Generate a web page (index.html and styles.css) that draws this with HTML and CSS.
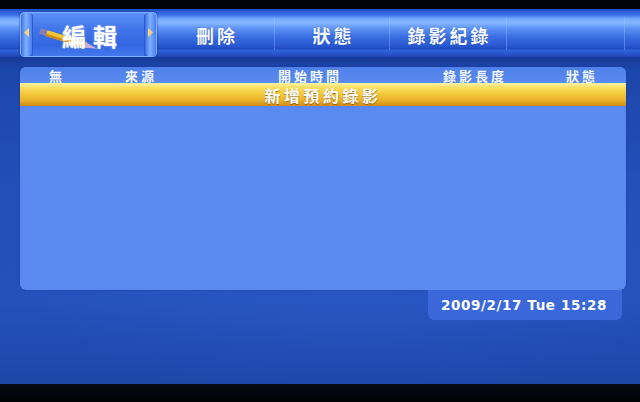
FILE: index.html
```html
<!DOCTYPE html>
<html lang="zh-Hant">
<head>
<meta charset="utf-8">
<title>預約錄影</title>
<link rel="stylesheet" href="styles.css">
</head>
<body>
<div class="screen">
  <div class="bezel-top"></div>
  <nav class="tabbar">
    <div class="tab-lead"></div>
    <div class="tab-active">
      <span class="cap cap-left">
        <svg width="5" height="9" viewBox="0 0 5 9"><polygon points="5,0 0,4.5 5,9" fill="#f4d47a"/></svg>
      </span>
      <span class="tab-body">
        <svg class="pencil" width="60" height="24" viewBox="0 0 60 24">
          <g transform="translate(2,3) rotate(17.2)">
            <rect x="0" y="-3" width="7" height="6" fill="#8a7fb4"/>
            <rect x="7" y="-3" width="40" height="6" fill="#f3c630"/>
            <rect x="7" y="0.8" width="40" height="2.2" fill="#d38a12"/>
            <polygon points="47,-3 60,0 47,3" fill="#c6b0dc"/>
          </g>
        </svg>
        <span class="active-label">編輯</span>
      </span>
      <span class="cap cap-right">
        <svg width="5" height="9" viewBox="0 0 5 9"><polygon points="0,0 5,4.5 0,9" fill="#f4d47a"/></svg>
      </span>
    </div>
    <div class="tab tab-w118">刪除</div>
    <div class="tab tab-w115">狀態</div>
    <div class="tab tab-w117">錄影紀錄</div>
    <div class="tab tab-w118"></div>
    <div class="tab-rest"></div>
  </nav>
  <main class="content">
    <section class="panel">
      <div class="head">
        <span class="c1">無</span>
        <span class="c2">來源</span>
        <span class="c3">開始時間</span>
        <span class="c4">錄影長度</span>
        <span class="c5">狀態</span>
      </div>
      <div class="new-row">新增預約錄影</div>
    </section>
    <div class="clock">2009/2/17 Tue 15:28</div>
  </main>
  <div class="bezel-bottom"></div>
</div>
</body>
</html>
```

FILE: styles.css
```css
* { box-sizing: border-box; }
html, body {
  margin: 0;
  padding: 0;
  background: #000;
}
body {
  width: 640px;
  height: 402px;
  overflow: hidden;
  font-family: "Noto Sans CJK TC", "Noto Sans CJK SC", sans-serif;
  color: #fff;
}
.screen {
  width: 640px;
  height: 402px;
  display: flex;
  flex-direction: column;
}
.bezel-top {
  height: 9px;
  background: #020308;
}
.bezel-bottom {
  height: 18px;
  background: linear-gradient(to bottom, #050a14, #010205);
}

/* ---------- tab bar ---------- */
.tabbar {
  height: 48px;
  display: flex;
  align-items: flex-start;
  background: linear-gradient(to bottom,
    #1f4ec4 0px,
    #3a70e8 6px,
    #78acff 10px,
    #82b6ff 14px,
    #5a90f4 20px,
    #3a6ce2 28px,
    #2a5ad4 36px,
    #1f4cc0 40px,
    #3062d8 41px,
    #2a58d0 44px,
    #1c44b0 48px);
}
.tab-lead {
  width: 20px;
  height: 48px;
}
.tab {
  height: 33px;
  margin-top: 8px;
  display: flex;
  align-items: center;
  justify-content: center;
  padding: 2px 0 0 3px;
  font-size: 18px;
  font-weight: 700;
  letter-spacing: 3px;
  color: #f4f8ff;
  text-shadow: 0 0 1px rgba(20, 40, 120, 0.6);
  border-right: 1px solid rgba(170, 205, 255, 0.35);
}
.tab-w118 { width: 118px; }
.tab-w115 { width: 115px; }
.tab-w117 { width: 117px; }
.tab-rest { flex: 1; height: 48px; }

.tab-active {
  width: 137px;
  height: 45px;
  margin-top: 3px;
  display: flex;
  border-radius: 4px;
  border: 1px solid #7eaefc;
  background: linear-gradient(to bottom, #6c9ff8 0%, #4a80f0 25%, #3669e4 60%, #2f60dc 100%);
  box-shadow: 0 0 2px rgba(10, 30, 110, 0.8);
}
.cap {
  width: 12px;
  display: flex;
  align-items: center;
  justify-content: center;
  padding-bottom: 4px;
  border-radius: 4px;
  background: linear-gradient(to right, #3a6ee6 0%, #7fb0ff 45%, #4a7fee 100%);
}
.cap-left { border-right: 1px solid #2a58d0; }
.cap-right { border-left: 1px solid #2a58d0; }
.tab-body {
  flex: 1;
  display: flex;
  align-items: center;
  background: linear-gradient(to bottom, #5b8ff6 0%, #3f74ea 40%, #3367e2 75%, #4478ec 100%);
}
.pencil {
  margin: 10px -36px 0 5px;
  flex: none;
}
.active-label {
  font-size: 24px;
  font-weight: 700;
  letter-spacing: 7px;
  line-height: 1;
  color: #ffffff;
  text-shadow: 0 0 2px rgba(255, 255, 255, 0.6);
  margin-top: 2px;
}

/* ---------- content ---------- */
.content {
  flex: 1;
  display: flex;
  flex-direction: column;
  padding: 10px 14px 0 20px;
  background:
    radial-gradient(ellipse at 55% 55%, rgba(60, 110, 230, 0.25), rgba(0, 0, 0, 0) 70%),
    linear-gradient(to bottom, #173a9a 0px, #1d46aa 12px, #2250b8 40%, #2452ba 75%, #1d46a8 100%);
}
.panel {
  height: 223px;
  border-radius: 6px;
  background: #5a8aef;
  box-shadow: 0 0 2px rgba(20, 50, 140, 0.7);
  overflow: hidden;
}
.head {
  height: 16px;
  display: grid;
  grid-template-columns: 76px 153px 165px 123px 1fr;
  padding-left: 29px;
  align-items: center;
  font-size: 13px;
  font-weight: 700;
  letter-spacing: 3px;
  line-height: 1;
  color: #f2f6ff;
  background: linear-gradient(to bottom, #4e80ea, #5a8aef);
}
.new-row {
  height: 23px;
  display: flex;
  align-items: center;
  justify-content: center;
  padding: 1px 0 0 0;
  font-size: 16px;
  font-weight: 700;
  letter-spacing: 3.5px;
  line-height: 1;
  color: #ffffff;
  text-shadow: 0 1px 1px rgba(120, 70, 0, 0.7);
  background: linear-gradient(to bottom,
    #fff3a8 0%,
    #f9dc5a 22%,
    #f2c73a 50%,
    #eab22a 75%,
    #cf8a14 100%);
}
.clock {
  align-self: flex-end;
  width: 194px;
  height: 30px;
  margin-right: 4px;
  display: flex;
  align-items: center;
  padding-left: 13px;
  font-family: "DejaVu Sans", "Liberation Sans", sans-serif;
  font-size: 13.5px;
  font-weight: 700;
  letter-spacing: 0.6px;
  color: #ffffff;
  background: #3a67da;
  border-radius: 0 0 6px 6px;
}
```
